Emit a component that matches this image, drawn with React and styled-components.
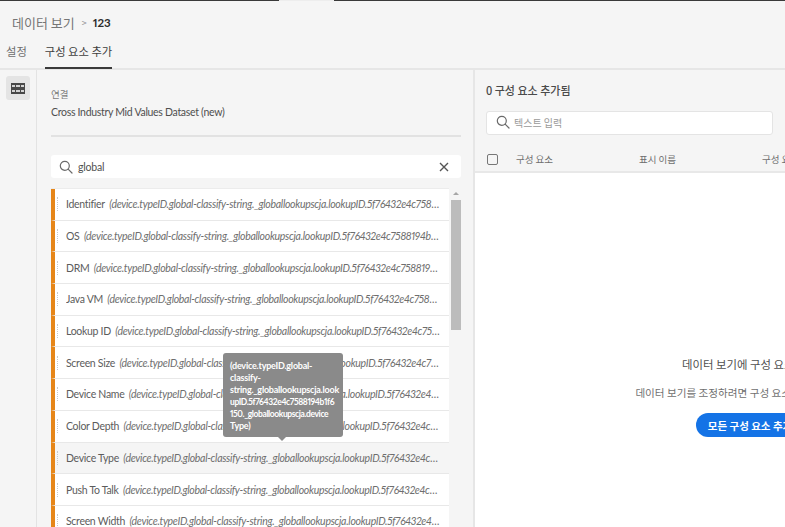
import React from 'react';
import styled, { createGlobalStyle } from 'styled-components';

const KR = `"Noto Sans CJK KR", sans-serif`;
const LATIN = `Lato, "Noto Sans CJK KR", sans-serif`;

const GlobalStyle = createGlobalStyle`
    html, body {
        margin: 0;
        padding: 0;
        background: #f5f5f5;
    }
    * {
        box-sizing: border-box;
    }
`;

const Page = styled.div`
    width: 785px;
    height: 527px;
    overflow: hidden;
    display: flex;
    flex-direction: column;
    background: #f5f5f5;
    font-family: ${LATIN};
    font-variant-numeric: proportional-nums;
    color: #4b4b4b;
`;

const TopLine = styled.div`
    flex: none;
    height: 1px;
    background: linear-gradient(to right, #3a3a3a 279px, #ededed 279px, #ededed 334px, #3a3a3a 334px);
`;

const Header = styled.div`
    height: 69px;
    flex: none;
    padding: 13px 0 0 12px;
    border-bottom: 2px solid #e6e6e6;
`;

const Breadcrumb = styled.div`
    display: flex;
    align-items: center;
    height: 17px;
    font-size: 13px;
    font-family: ${KR};
    color: #767676;
`;

const Crumb = styled.span`
    font-family: ${LATIN};
    font-weight: 700;
    font-size: 11.5px;
    color: #2c2c2c;
`;

const CrumbSep = styled.span`
    margin: 0 6px 0 7px;
    font-size: 9px;
    color: #8e8e8e;
`;

const Tabs = styled.div`
    display: flex;
    margin: 9px 0 0 -6px;
    gap: 18px;
`;

const Tab = styled.div`
    height: 29px;
    padding-top: 3px;
    font-family: ${KR};
    font-size: 11.3px;
    line-height: 16px;
    color: ${({ $active }) => ($active ? '#3f3f3f' : '#6e6e6e')};
    border-bottom: 2px solid ${({ $active }) => ($active ? '#3a3a3a' : 'transparent')};
`;

const Body = styled.div`
    flex: 1;
    min-height: 0;
    display: flex;
`;

const Rail = styled.div`
    flex: 0 0 37px;
    padding: 6px 0 0 6px;
    border-right: 1px solid #e3e3e3;
`;

const RailButton = styled.div`
    width: 24px;
    height: 24px;
    border-radius: 3px;
    background: #e4e4e4;
    display: flex;
    align-items: center;
    justify-content: center;
`;

const LeftPanel = styled.div`
    position: relative;
    flex: 0 0 438px;
    min-width: 0;
    padding: 17px 12px 0 14px;
    border-right: 2px solid #e6e6e6;
`;

const FieldLabel = styled.div`
    font-family: ${KR};
    font-size: 9.5px;
    line-height: 14px;
    color: #7c7c7c;
`;

const FieldValue = styled.div`
    margin-top: 4px;
    font-size: 10.5px;
    letter-spacing: -0.3px;
    line-height: 15px;
    color: #4f4f4f;
`;

const Divider = styled.div`
    height: 2px;
    margin-top: 15px;
    background: #e2e2e2;
`;

const SearchBox = styled.div`
    height: 23px;
    margin-top: 18px;
    padding: 0 12px 0 8px;
    display: flex;
    align-items: center;
    gap: 5px;
    background: #fff;
    border-radius: 3px;
    font-size: 10.5px;
    letter-spacing: -0.2px;
    color: #505050;
`;

const SearchText = styled.span`
    flex: 1;
`;

const ListArea = styled.div`
    margin-top: 10px;
    display: flex;
    gap: 2px;
`;

const List = styled.div`
    flex: 0 0 398px;
    min-width: 0;
    background: #fff;
    border-top: 1px solid #ececec;
`;

const Row = styled.div`
    height: 31.7px;
    display: flex;
    align-items: center;
    background: ${({ $hover }) => ($hover ? '#f5f5f5' : '#fff')};
    border-bottom: 1px solid #e8e8e8;
    border-left: 4px solid #e68619;
    padding: 0 8px 0 2px;
`;

const Grip = styled.div`
    flex: none;
    width: 1px;
    height: 14px;
    margin-right: 8px;
    border-left: 1px dotted #c8c8c8;
`;

const RowText = styled.div`
    flex: 1;
    min-width: 0;
    white-space: nowrap;
    overflow: hidden;
    text-overflow: ellipsis;
    font-size: 10.5px;
    letter-spacing: -0.3px;
    color: #6e6e6e;
`;

const RowName = styled.span`
    color: #5c5c5c;
    margin-right: 2px;
`;

const RowPath = styled.span`
    font-style: italic;
`;

const Scrollbar = styled.div`
    flex: 0 0 10px;
    padding-top: 12px;
    position: relative;
`;

const ScrollArrow = styled.div`
    position: absolute;
    top: 4px;
    left: 2px;
    width: 0;
    height: 0;
    border-left: 3px solid transparent;
    border-right: 3px solid transparent;
    border-bottom: 3px solid #a6a6a6;
`;

const ScrollThumb = styled.div`
    height: 130px;
    background: #bcbcbc;
`;

const Tooltip = styled.div`
    position: absolute;
    left: 186px;
    top: 283px;
    width: 120px;
    height: 84px;
    padding: 7px 4px 6px 7px;
    background: #8a8a8a;
    border-radius: 3px;
    color: #fff;
    font-size: 9px;
    font-weight: 700;
    letter-spacing: -0.22px;
    line-height: 12px;

    &::after {
        content: '';
        position: absolute;
        left: 55px;
        bottom: -4px;
        border-left: 4px solid transparent;
        border-right: 4px solid transparent;
        border-top: 4px solid #8a8a8a;
    }
`;

const TipTight = styled.span`
    font-size: 8.5px;
    letter-spacing: -0.4px;
`;

const RightPanel = styled.div`
    flex: 0 0 550px;
    min-width: 0;
    display: flex;
    flex-direction: column;
`;

const RightTop = styled.div`
    height: 103px;
    flex: none;
    padding: 12px 0 0 11px;
    border-bottom: 2px solid #e8e8e8;
`;

const AddedTitle = styled.div`
    font-family: ${KR};
    font-size: 11px;
    font-weight: 500;
    line-height: 16px;
    color: #4a4a4a;
`;

const FilterBox = styled.div`
    width: 287px;
    height: 24px;
    margin-top: 13px;
    padding: 0 0 2px 9px;
    display: flex;
    align-items: center;
    gap: 4px;
    background: #fff;
    border: 1px solid #e4e4e4;
    border-radius: 3px;
    font-family: ${KR};
    font-size: 10px;
    color: #9a9a9a;
`;

const TableHead = styled.div`
    display: flex;
    align-items: center;
    margin-top: 17px;
    font-family: ${KR};
    font-size: 9.5px;
    color: #6e6e6e;
`;

const Check = styled.div`
    flex: none;
    width: 11px;
    height: 11px;
    margin-left: 1px;
    border: 1.5px solid #777;
    border-radius: 2px;
`;

const HeadCell = styled.div`
    flex: 0 0 ${({ $w }) => $w}px;
    white-space: nowrap;
`;

const Empty = styled.div`
    flex: 1;
    background: #fff;
    display: flex;
    flex-direction: column;
    align-items: center;
    padding-top: 183px;
    font-family: ${KR};
`;

const EmptyTitle = styled.div`
    font-size: 11.4px;
    line-height: 16px;
    color: #505050;
    white-space: nowrap;
`;

const EmptyNote = styled.div`
    margin-top: 13px;
    font-size: 10.6px;
    line-height: 15px;
    color: #707070;
    white-space: nowrap;
`;

const AddAll = styled.button`
    margin-top: 13px;
    height: 24px;
    padding: 0 12px;
    border: none;
    border-radius: 12px;
    background: #1473e6;
    color: #fff;
    font-family: ${KR};
    font-size: 10.5px;
    font-weight: 700;
    white-space: nowrap;
`;

const SearchIcon = () => (
    <svg width="14" height="14" viewBox="0 0 14 14" fill="none" stroke="#6a6a6a" strokeWidth="1.2">
        <circle cx="5.8" cy="5.8" r="4.5" />
        <path d="M9.1 9.1 L13 13" strokeLinecap="round" />
    </svg>
);

const CloseIcon = () => (
    <svg width="10" height="10" viewBox="0 0 10 10" fill="none" stroke="#555" strokeWidth="1.4">
        <path d="M1 1 L9 9 M9 1 L1 9" />
    </svg>
);

const TableIcon = () => (
    <svg width="14" height="11" viewBox="0 0 14 11">
        <rect x="0" y="0" width="14" height="11" fill="#484848" />
        <path d="M1 3H4M5 3H9M10 3H13M1 8H4M5 8H9M10 8H13" stroke="#fff" strokeWidth="1.6" />
    </svg>
);

const rows = [
    ['Identifier', 'device.typeID.global-classify-string._globallookupscja.lookupID.5f76432e4c7588194b1f6150._globallookupscja.identifier'],
    ['OS', 'device.typeID.global-classify-string._globallookupscja.lookupID.5f76432e4c7588194b1f6150._globallookupscja.os'],
    ['DRM', 'device.typeID.global-classify-string._globallookupscja.lookupID.5f76432e4c7588194b1f6150._globallookupscja.drm'],
    ['Java VM', 'device.typeID.global-classify-string._globallookupscja.lookupID.5f76432e4c7588194b1f6150._globallookupscja.javaVM'],
    ['Lookup ID', 'device.typeID.global-classify-string._globallookupscja.lookupID.5f76432e4c7588194b1f6150._globallookupscja.lookupID'],
    ['Screen Size', 'device.typeID.global-classify-string._globallookupscja.lookupID.5f76432e4c7588194b1f6150._globallookupscja.screenSize'],
    ['Device Name', 'device.typeID.global-classify-string._globallookupscja.lookupID.5f76432e4c7588194b1f6150._globallookupscja.deviceName'],
    ['Color Depth', 'device.typeID.global-classify-string._globallookupscja.lookupID.5f76432e4c7588194b1f6150._globallookupscja.colorDepth'],
    ['Device Type', 'device.typeID.global-classify-string._globallookupscja.lookupID.5f76432e4c7588194b1f6150._globallookupscja.deviceType', true],
    ['Push To Talk', 'device.typeID.global-classify-string._globallookupscja.lookupID.5f76432e4c7588194b1f6150._globallookupscja.pushToTalk'],
    ['Screen Width', 'device.typeID.global-classify-string._globallookupscja.lookupID.5f76432e4c7588194b1f6150._globallookupscja.screenWidth'],
];

export default function App() {
    return (
        <Page>
            <GlobalStyle />
            <TopLine />
            <Header>
                <Breadcrumb>
                    데이터 보기<CrumbSep>&gt;</CrumbSep><Crumb>123</Crumb>
                </Breadcrumb>
                <Tabs>
                    <Tab>설정</Tab>
                    <Tab $active>구성 요소 추가</Tab>
                </Tabs>
            </Header>
            <Body>
                <Rail>
                    <RailButton><TableIcon /></RailButton>
                </Rail>
                <LeftPanel>
                    <FieldLabel>연결</FieldLabel>
                    <FieldValue>Cross Industry Mid Values Dataset (new)</FieldValue>
                    <Divider />
                    <SearchBox>
                        <SearchIcon />
                        <SearchText>global</SearchText>
                        <CloseIcon />
                    </SearchBox>
                    <ListArea>
                        <List>
                            {rows.map(([name, path, hover]) => (
                                <Row key={name} $hover={hover}>
                                    <Grip />
                                    <RowText>
                                        <RowName>{name}</RowName> <RowPath>({path})</RowPath>
                                    </RowText>
                                </Row>
                            ))}
                        </List>
                        <Scrollbar>
                            <ScrollArrow />
                            <ScrollThumb />
                        </Scrollbar>
                    </ListArea>
                    <Tooltip>
                        (device.typeID.global-classify-string._globallookupscja.look<wbr /><TipTight>upID.5f76432e4c7588194b1f6<wbr />150._globallookupscja.device</TipTight><wbr />Type)
                    </Tooltip>
                </LeftPanel>
                <RightPanel>
                    <RightTop>
                        <AddedTitle>0 구성 요소 추가됨</AddedTitle>
                        <FilterBox>
                            <SearchIcon />
                            텍스트 입력
                        </FilterBox>
                        <TableHead>
                            <Check />
                            <HeadCell $w={18} />
                            <HeadCell $w={123}>구성 요소</HeadCell>
                            <HeadCell $w={123}>표시 이름</HeadCell>
                            <HeadCell $w={120}>구성 요소 유형</HeadCell>
                        </TableHead>
                    </RightTop>
                    <Empty>
                        <EmptyTitle>데이터 보기에 구성 요소 추가</EmptyTitle>
                        <EmptyNote>데이터 보기를 조정하려면 구성 요소를 추가하십시오.</EmptyNote>
                        <AddAll>모든 구성 요소 추가</AddAll>
                    </Empty>
                </RightPanel>
            </Body>
        </Page>
    );
}
